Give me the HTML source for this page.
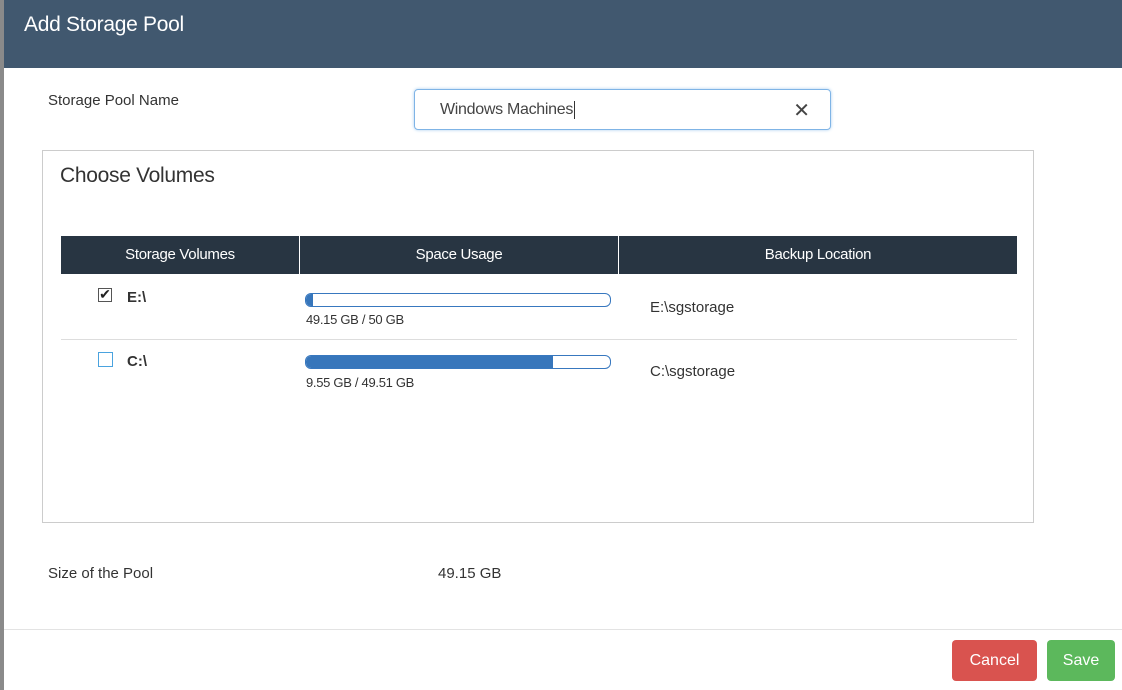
<!DOCTYPE html>
<html><head><style>
*{margin:0;padding:0;box-sizing:border-box}
body{width:1122px;height:690px;overflow:hidden;background:#8a8a8a;font-family:"Liberation Sans",sans-serif;color:#333;position:relative}
.modal{position:absolute;left:4px;top:0;width:1118px;height:690px;background:#fff}
.hdr{height:68px;background:#41586f;color:#fff;font-size:21px;padding:13px 0 0 20px;letter-spacing:-0.3px}
.abs{position:absolute}
.lbl{font-size:15px;color:#333}
.inp{left:410px;top:89px;width:417px;height:41px;border:1px solid #7fb4e6;border-radius:4px;box-shadow:0 0 3px #a8cdf0}
.inp span{position:absolute;left:25px;top:11px;font-size:16px;color:#444;border-right:1px solid #333;padding-right:1px;letter-spacing:-0.3px}
.inp i{position:absolute;right:20px;top:8px;font-style:normal;font-size:20px;color:#444}
.box{left:38px;top:150px;width:992px;height:373px;border:1px solid #ccc}
.th{top:236px;height:38px;background:#283542;color:#fff;font-size:15px;text-align:center;line-height:38px;letter-spacing:-0.3px}
.bar{width:306px;height:14px;border:1px solid #3878bf;border-radius:6px;overflow:hidden}
.bar div{height:100%;background:#3776bb}
.small{font-size:13px;color:#333;letter-spacing:-0.3px}
.drv{font-size:15px;font-weight:bold;color:#333}
.btn{top:640px;height:41px;border-radius:4px;color:#fff;font-size:16px;text-align:center;line-height:41px}
</style></head><body>
<div class="modal">
<div class="hdr">Add Storage Pool</div>
<div class="abs lbl" style="left:44px;top:92px">Storage Pool Name</div>
<div class="abs inp"><span>Windows Machines</span><i>✕</i></div>
<div class="abs box"></div>
<div class="abs" style="left:56px;top:164px;font-size:21px;color:#333;letter-spacing:-0.3px">Choose Volumes</div>
<div class="abs th" style="left:57px;width:238px">Storage Volumes</div>
<div class="abs th" style="left:296px;width:318px">Space Usage</div>
<div class="abs th" style="left:615px;width:398px">Backup Location</div>
<div class="abs" style="left:57px;top:339px;width:956px;height:1px;background:#ddd"></div>
<div class="abs" style="left:94px;top:288px;width:14px;height:14px;border:1px solid #555;font-size:14px;line-height:11px;text-align:center;color:#222">✔</div>
<div class="abs drv" style="left:123px;top:289px">E:\</div>
<div class="abs bar" style="left:301px;top:293px"><div style="width:7px"></div></div>
<div class="abs small" style="left:302px;top:312px">49.15 GB / 50 GB</div>
<div class="abs lbl" style="left:646px;top:299px">E:\sgstorage</div>
<div class="abs" style="left:94px;top:352px;width:15px;height:15px;border:1.5px solid #4aa3df"></div>
<div class="abs drv" style="left:123px;top:353px">C:\</div>
<div class="abs bar" style="left:301px;top:355px"><div style="width:247px"></div></div>
<div class="abs small" style="left:302px;top:375px">9.55 GB / 49.51 GB</div>
<div class="abs lbl" style="left:646px;top:363px">C:\sgstorage</div>
<div class="abs lbl" style="left:44px;top:565px">Size of the Pool</div>
<div class="abs lbl" style="left:434px;top:565px">49.15 GB</div>
<div class="abs" style="left:0;top:629px;width:1118px;height:1px;background:#e3e3e3"></div>
<div class="abs btn" style="left:948px;width:85px;background:#d9534f">Cancel</div>
<div class="abs btn" style="left:1043px;width:68px;background:#5cb85c">Save</div>
</div>
</body></html>
